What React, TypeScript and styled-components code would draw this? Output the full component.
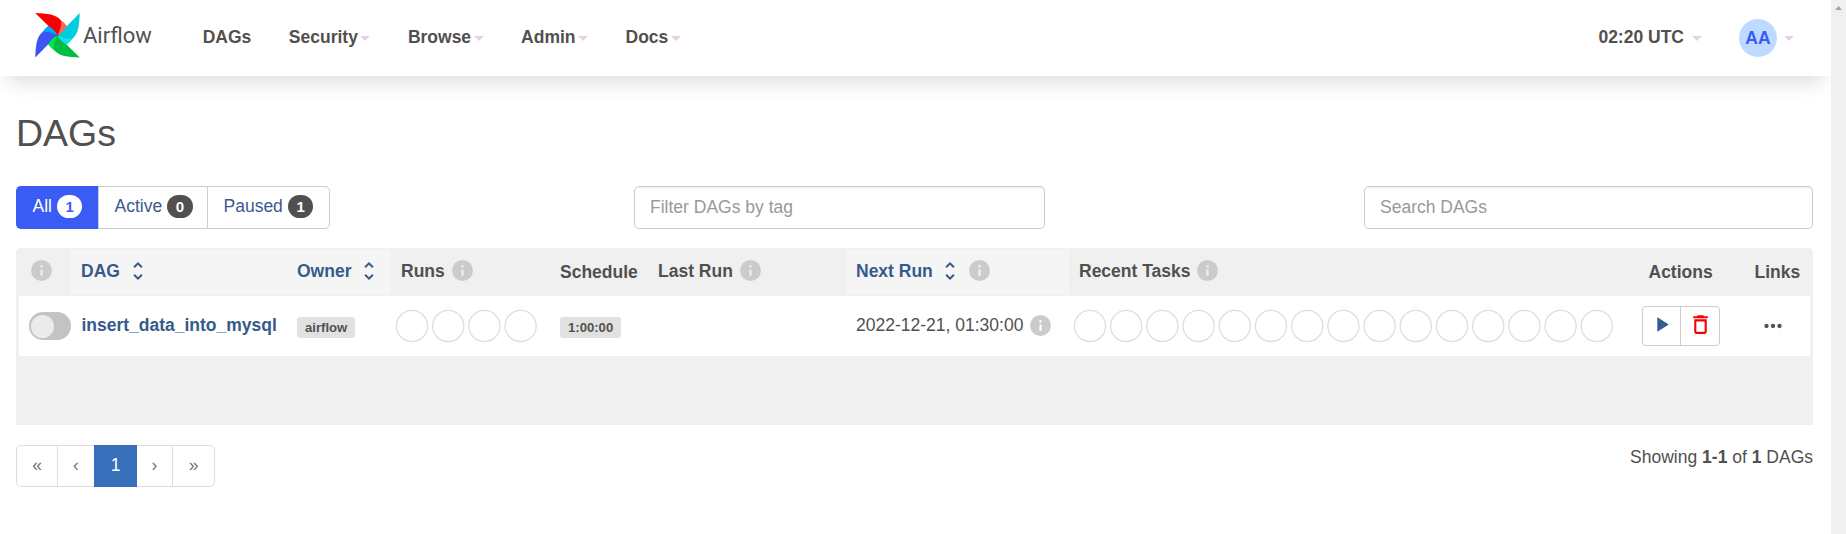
import React from 'react';
import styled, { createGlobalStyle, css } from 'styled-components';

const GlobalStyle = createGlobalStyle`
  * { box-sizing: border-box; }
  body {
    margin: 0;
    background: #fff;
    color: #51504f;
    font-family: "Liberation Sans", Arial, sans-serif;
    font-size: 17.5px;
    line-height: 25px;
    overflow: hidden;
  }
`;

const Screen = styled.div`
  display: flex;
  width: 1846px;
  height: 534px;
`;
const Page = styled.div`
  width: 1831px;
  overflow: hidden;
`;
const Scrollbar = styled.div`
  width: 15px;
  background: #f0f0f0;
  display: flex;
  justify-content: center;
  padding-top: 6px;
`;

const Navbar = styled.nav`
  height: 76px;
  display: flex;
  align-items: flex-start;
  padding: 0 37px 0 35px;
  background: #fff;
  box-shadow: 0 14px 20px -8px rgba(0, 0, 0, 0.14);
`;
const Brand = styled.div`
  display: flex;
  width: 167.7px;
  padding-top: 13px;
`;
const BrandName = styled.span`
  margin: 10px 0 0 3px;
  font-family: Roboto, sans-serif;
  font-size: 22px;
`;
const Menu = styled.div`
  display: flex;
  gap: 37.5px;
  padding-top: 25px;
  flex: 1;
`;
const NavItem = styled.div<{ $gap?: number }>`
  display: flex;
  align-items: center;
  gap: ${(p) => p.$gap ?? 2.5}px;
  height: 25px;
  font-weight: bold;
  white-space: nowrap;
`;
const Clock = styled(NavItem)`
  margin-top: 25px;
`;
const Caret = styled.i`
  margin-top: 2px;
  border: 5px solid transparent;
  border-top-color: #e8cfe4;
  border-bottom: 0;
`;
const UserMenu = styled.div`
  display: flex;
  align-items: center;
  gap: 7px;
  margin: 19px 0 0 37px;
  & > ${Caret} { margin-top: 0; }
`;
const Avatar = styled.div`
  width: 38px;
  height: 38px;
  border-radius: 50%;
  background: #bfdaff;
  color: #3b5bf5;
  font-weight: bold;
  line-height: 38px;
  text-align: center;
`;

const Main = styled.main`
  padding: 37px 18px 0 16px;
`;
const Title = styled.h2`
  margin: 0 0 32px;
  font-size: 37.5px;
  font-weight: normal;
  line-height: 41px;
`;
const Filters = styled.div`
  display: flex;
  height: 43px;
  margin-bottom: 19px;
`;
const Tabs = styled.div`
  display: flex;
  width: 618px;
`;
const Tab = styled.div<{ $active?: boolean; $width: number }>`
  width: ${(p) => p.$width}px;
  display: flex;
  align-items: center;
  gap: 5px;
  padding: 0 0 2px 15.5px;
  border: 1px solid #ccc;
  border-right-width: 0;
  color: #3b5a8c;
  &:first-child { border-radius: 5px 0 0 5px; }
  &:last-child { border-radius: 0 5px 5px 0; border-right-width: 1px; }
  ${(p) => p.$active && css`
    background: #3b5bf5;
    border-color: #3b5bf5;
    color: #fff;
  `}
`;
const Badge = styled.span<{ $light?: boolean }>`
  width: 25.5px;
  height: 23px;
  border-radius: 12px;
  background: ${(p) => (p.$light ? '#fff' : '#51504f')};
  color: ${(p) => (p.$light ? '#3b5bf5' : '#fff')};
  font-size: 15px;
  font-weight: bold;
  line-height: 23px;
  text-align: center;
`;
const TextInput = styled.input<{ $width: number }>`
  width: ${(p) => p.$width}px;
  height: 43px;
  padding: 0 15px 1px;
  border: 1px solid #ccc;
  border-radius: 5px;
  background: #fff;
  box-shadow: inset 0 1px 1px rgba(0, 0, 0, 0.075);
  font: inherit;
  outline: 0;
  & + & { margin-left: auto; }
  &::placeholder { color: #999; opacity: 1; }
`;

const TableFrame = styled.section`
  height: 177px;
  padding: 0 3px;
  border-radius: 5px 5px 0 0;
  background: #f0f0f0;
`;
const columns = css`
  display: grid;
  grid-template-columns: 52px 216px 104px 159px 98px 198px 223px 557px 110px 74px;
`;
const Icon = styled.svg<{ $space?: number }>`
  flex: none;
  display: block;
  margin-left: ${(p) => p.$space ?? 0}px;
`;
const HeadRow = styled.div`
  ${columns}
  height: 48px;
  padding: 1px 0;
`;
const HeadCell = styled.div<{ $sort?: boolean; $low?: boolean; $left?: number }>`
  display: flex;
  align-items: center;
  padding: ${(p) => (p.$low ? 1 : 0)}px 0 ${(p) => (p.$low ? 0 : 2)}px ${(p) => p.$left ?? 10}px;
  background: ${(p) => (p.$sort ? '#f5f5f5' : 'transparent')};
  color: ${(p) => (p.$sort ? '#365a8c' : 'inherit')};
  font-weight: bold;
  white-space: nowrap;
  & > ${Icon} { margin-top: -1px; }
`;
const BodyRow = styled.div`
  ${columns}
  height: 60px;
  background: #fff;
`;
const Cell = styled.div<{ $left?: number; $lift?: number }>`
  display: flex;
  align-items: center;
  padding: 0 0 ${(p) => p.$lift ?? 0}px ${(p) => p.$left ?? 10}px;
  white-space: nowrap;
`;
const Switch = styled.div`
  width: 42px;
  height: 28px;
  padding: 2.5px;
  padding-left: 2px;
  border-radius: 14px;
  background: #c4c3c1;
`;
const Knob = styled.div`
  width: 23px;
  height: 23px;
  border-radius: 50%;
  background: #ebebeb;
`;
const DagLink = styled.a`
  margin-left: 0.4px;
  color: #365a8c;
  font-weight: bold;
`;
const Label = styled.span`
  height: 21px;
  margin-top: 3px;
  padding: 0 8px;
  border-radius: 3px;
  background: #e1e1e1;
  font-size: 13.125px;
  font-weight: bold;
  line-height: 21.5px;
`;
const ButtonGroup = styled.div`
  display: flex;
  width: 78px;
  height: 40px;
  border: 1px solid #ccc;
  border-radius: 4px;
`;
const IconButton = styled.button`
  width: 37px;
  display: flex;
  align-items: center;
  justify-content: center;
  padding: 0 0 3px;
  border: 0;
  background: none;
  & + & {
    width: 39px;
    border-left: 1px solid #ccc;
  }
`;

const Footer = styled.footer`
  display: flex;
  justify-content: space-between;
  padding-top: 20px;
`;
const Pagination = styled.div`
  display: flex;
  height: 42px;
`;
const PageButton = styled.div<{ $width: number; $active?: boolean }>`
  width: ${(p) => p.$width}px;
  border: 1px solid ${(p) => (p.$active ? '#386fba' : '#ddd')};
  border-right-width: ${(p) => (p.$active ? 1 : 0)}px;
  background: ${(p) => (p.$active ? '#386fba' : '#fff')};
  color: ${(p) => (p.$active ? '#fff' : '#777')};
  line-height: 39px;
  text-align: center;
  &:first-child { border-radius: 5px 0 0 5px; }
  &:last-child { border-radius: 0 5px 5px 0; border-right-width: 1px; }
`;
const NextButton = styled(PageButton)`
  border-left-width: 0;
`;
const Summary = styled.div`
  line-height: 24px;
`;

const blades = [
  { angle: 0, main: '#f60000', light: '#ff6550' },
  { angle: 90, main: '#00cddc', light: '#11e1ee' },
  { angle: 180, main: '#00be41', light: '#00e650' },
  { angle: 270, main: '#3b57f0', light: '#00a8ff' },
];

const Pinwheel = () => (
  <Icon width="45" height="45" viewBox="-22.5 -22.3 45 45">
    {blades.map((b) => (
      <path
        key={b.light}
        transform={`rotate(${b.angle})`}
        fill={b.light}
        d="M2.500-15.500C6-13.500 8-11 9.500-9 8.800-4 5-1 0 0Z"
      />
    ))}
    {blades.map((b) => (
      <path
        key={b.main}
        transform={`rotate(${b.angle})`}
        fill={b.main}
        d="M-22.300-22.200C-10-21.800-1.500-21 3.400-14.800 4.200-9 2-4 0 0-1.800-3.500-5-7.500-9-9.200Z"
      />
    ))}
    <circle r="1" fill="#51504f" />
  </Icon>
);

const Info = ({ space, hole = '#f0f0f0' }: { space?: number; hole?: string }) => (
  <Icon $space={space} width="21" height="21" viewBox="0 0 21 21">
    <circle cx="10.5" cy="10.5" r="10.5" fill="#cbcbcb" />
    <path fill={hole} d="M9.400 5.300h2.200v2.100H9.400zM9.400 9.400h2.200v6.300H9.400z" />
  </Icon>
);

const Sort = ({ space }: { space: number }) => (
  <Icon $space={space} width="24" height="24" viewBox="0 0 24 24" fill="#365a8c">
    <path d="M12 5.830 15.170 9l1.410-1.410L12 3 7.410 7.590 8.830 9zM12 18.170 8.830 15l-1.410 1.410L12 21l4.590-4.590L15.170 15z" />
  </Icon>
);

const Circles = ({ count }: { count: number }) => (
  <Icon width={count * 36.2} height="34" viewBox={`0 0 ${count * 36.2} 34`}>
    {Array.from({ length: count }, (_, i) => (
      <circle key={i} cx={17 + i * 36.2} cy="17" r="15.6" fill="none" stroke="#ddd" strokeWidth="1.25" />
    ))}
  </Icon>
);

export default function App() {
  return (
    <Screen>
      <GlobalStyle />
      <Page>
        <Navbar>
          <Brand>
            <Pinwheel />
            <BrandName>Airflow</BrandName>
          </Brand>
          <Menu>
            <NavItem>DAGs</NavItem>
            {['Security', 'Browse', 'Admin', 'Docs'].map((name) => (
              <NavItem key={name}>
                {name}
                <Caret />
              </NavItem>
            ))}
          </Menu>
          <Clock $gap={8}>
            02:20 UTC
            <Caret />
          </Clock>
          <UserMenu>
            <Avatar>AA</Avatar>
            <Caret />
          </UserMenu>
        </Navbar>
        <Main>
          <Title>DAGs</Title>
          <Filters>
            <Tabs>
              <Tab $active $width={82}>All <Badge $light>1</Badge></Tab>
              <Tab $width={109}>Active <Badge>0</Badge></Tab>
              <Tab $width={123}>Paused <Badge>1</Badge></Tab>
            </Tabs>
            <TextInput $width={411} placeholder="Filter DAGs by tag" />
            <TextInput $width={449} placeholder="Search DAGs" />
          </Filters>
          <TableFrame>
            <HeadRow>
              <HeadCell><Info space={2} /></HeadCell>
              <HeadCell $sort>DAG<Sort space={6} /></HeadCell>
              <HeadCell $sort>Owner<Sort space={6} /></HeadCell>
              <HeadCell>Runs<Info space={7} /></HeadCell>
              <HeadCell $low>Schedule</HeadCell>
              <HeadCell>Last Run<Info space={7} /></HeadCell>
              <HeadCell $sort>Next Run<Sort space={5} /><Info space={7.5} hole="#f5f5f5" /></HeadCell>
              <HeadCell>Recent Tasks<Info space={6.5} /></HeadCell>
              <HeadCell $low $left={22.5}>Actions</HeadCell>
              <HeadCell $low $left={18.5}>Links</HeadCell>
            </HeadRow>
            <BodyRow>
              <Cell><Switch><Knob /></Switch></Cell>
              <Cell $lift={2}><DagLink>insert_data_into_mysql</DagLink></Cell>
              <Cell><Label>airflow</Label></Cell>
              <Cell $left={3.5}><Circles count={4} /></Cell>
              <Cell $left={10}><Label>1:00:00</Label></Cell>
              <Cell />
              <Cell $lift={2}>2022-12-21, 01:30:00<Info space={6.5} hole="#fff" /></Cell>
              <Cell $left={3.5}><Circles count={15} /></Cell>
              <Cell $left={16}>
                <ButtonGroup>
                  <IconButton aria-label="Trigger DAG">
                    <Icon width="25" height="25" viewBox="0 0 24 24" fill="#365a8c"><path d="M8 5v14l11-7z" /></Icon>
                  </IconButton>
                  <IconButton aria-label="Delete DAG">
                    <Icon width="25" height="25" viewBox="0 0 24 24" fill="#f60000">
                      <path d="M6 19c0 1.100.9 2 2 2h8c1.100 0 2-.9 2-2V7H6zM8 9h8v10H8zM15.500 4l-1-1h-5l-1 1H5v2h14V4z" fillRule="evenodd" />
                    </Icon>
                  </IconButton>
                </ButtonGroup>
              </Cell>
              <Cell $left={23.5} $lift={1}>
                <Icon width="26" height="26" viewBox="0 0 24 24" fill="#51504f">
                  <circle cx="6" cy="12" r="2" /><circle cx="12" cy="12" r="2" /><circle cx="18" cy="12" r="2" />
                </Icon>
              </Cell>
            </BodyRow>
          </TableFrame>
          <Footer>
            <Pagination>
              <PageButton $width={41}>«</PageButton>
              <PageButton $width={37}>‹</PageButton>
              <PageButton $width={43} $active>1</PageButton>
              <NextButton $width={35}>›</NextButton>
              <PageButton $width={43}>»</PageButton>
            </Pagination>
            <Summary>Showing <b>1-1</b> of <b>1</b> DAGs</Summary>
          </Footer>
        </Main>
      </Page>
      <Scrollbar>
        <Icon width="7" height="4" viewBox="0 0 7 4" fill="#a3a3a3"><path d="M0 4h7L3.500 0z" /></Icon>
      </Scrollbar>
    </Screen>
  );
}
